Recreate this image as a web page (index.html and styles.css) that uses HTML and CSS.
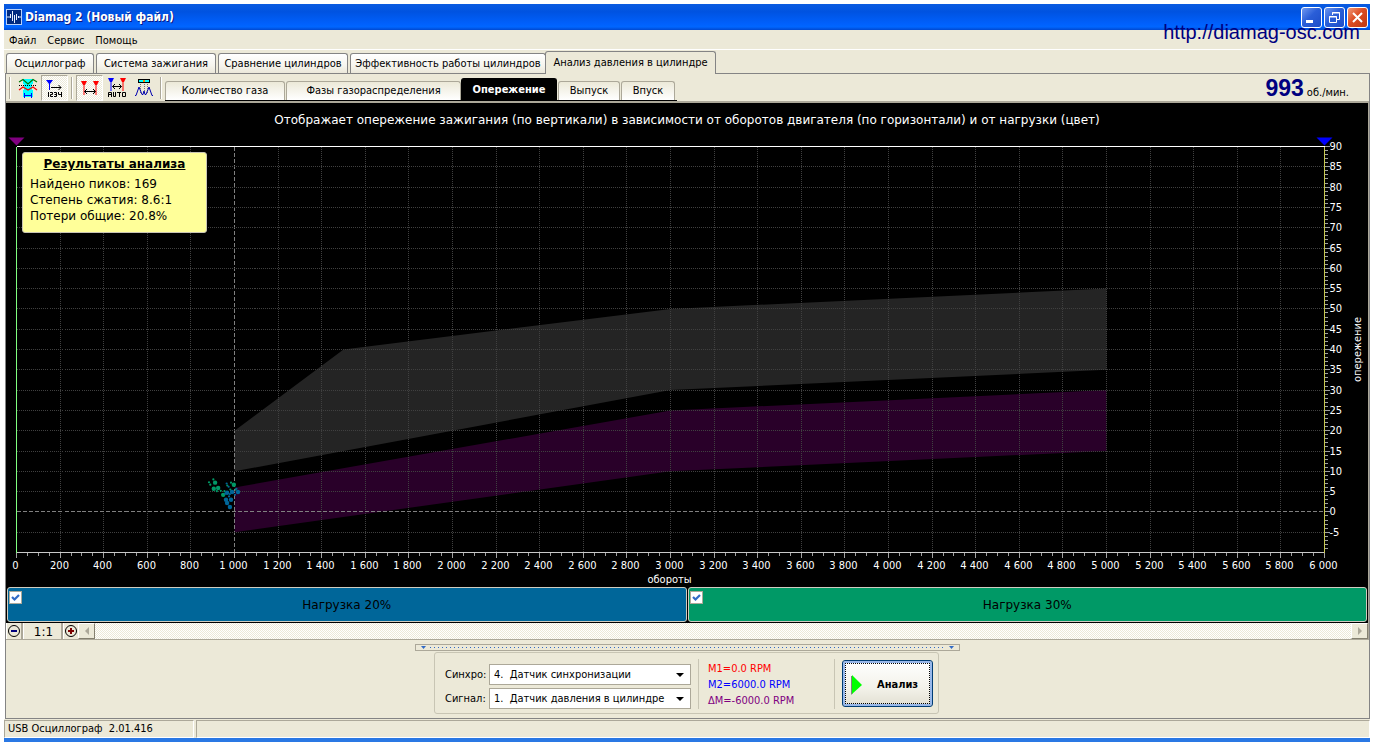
FILE: index.html
```html
<!DOCTYPE html>
<html lang="ru">
<head>
<meta charset="utf-8">
<title>Diamag 2 (Новый файл)</title>
<link rel="stylesheet" href="styles.css">
</head>
<body>
<div class="window">
  <header class="titlebar">
    <svg class="app-icon" viewBox="0 0 16 16" width="16" height="16">
      <rect x="0.5" y="0.5" width="15" height="15" fill="#002a80" stroke="#b8d0f8"/>
      <path d="M1 8H4M12 8H15" stroke="#d8e8ff"/>
      <path d="M4.500 5V9M6.500 2V12M8.500 6V14M10.500 5V11M12.500 7V9" stroke="#e8f0ff"/>
    </svg>
    <h1 class="title">Diamag 2 (Новый файл)</h1>
    <div class="window-buttons">
      <button class="win-btn" type="button" aria-label="Свернуть"><svg viewBox="0 0 19 19" width="19" height="19"><rect x="4" y="12" width="7" height="3" fill="#fff"/></svg></button>
      <button class="win-btn" type="button" aria-label="Восстановить"><svg viewBox="0 0 19 19" width="19" height="19"><path d="M7.500 7V4.500H14.500V11.500H12M7 5H15" fill="none" stroke="#fff"/><path d="M4.500 8.500H11.500V14.500H4.500ZM4 9H12" fill="none" stroke="#fff"/></svg></button>
      <button class="win-btn close" type="button" aria-label="Закрыть"><svg viewBox="0 0 19 19" width="19" height="19"><path d="M5 5L14 14M14 5L5 14" stroke="#fff" stroke-width="2"/></svg></button>
    </div>
    <a class="site-link" href="#">http://diamag-osc.com</a>
  </header>

  <nav class="menu">
    <button type="button">Файл</button>
    <button type="button">Сервис</button>
    <button type="button">Помощь</button>
  </nav>

  <div class="tabs" role="tablist">
    <button class="tab tab-s" role="tab" type="button">Осциллограф</button>
    <button class="tab tab-m" role="tab" type="button">Система зажигания</button>
    <button class="tab tab-l" role="tab" type="button">Сравнение цилиндров</button>
    <button class="tab tab-xl" role="tab" type="button">Эффективность работы цилиндров</button>
    <button class="tab active" role="tab" type="button" aria-selected="true">Анализ давления в цилиндре</button>
  </div>

  <main class="page">
    <div class="toolbar">
      <div class="tools">
        <i class="sep"></i>
        <button class="tool" type="button" aria-label="Фазы">
          <svg viewBox="0 0 20 20" width="20" height="20"><path d="M5 1H15V6H14V12H15V19H5V12H6V6H5Z" fill="#0ff"/><path d="M1 4L5 1.500L10 6L15 1.500L19 4" fill="none" stroke="#007a00" stroke-width="1.200"/><path d="M1 7.500H19" stroke="#000" stroke-dasharray="1 1"/><path d="M1 12L5 9L10 12L15 9L19 12" fill="none" stroke="#f00" stroke-width="1.300"/><path d="M6 17.500H14M6.500 15V20M13.500 15V20" stroke="#00f"/></svg>
        </button>
        <button class="tool pressed" type="button" aria-label="Нумерация">
          <svg viewBox="0 0 20 20" width="20" height="20"><path d="M1 2H8L5 6H4Z" fill="#00f"/><path d="M4.500 4V12" stroke="#00f"/><path d="M6 9.500H16M13.500 7L16 9.500L13.500 12" fill="none" stroke="#000"/><path d="M3.500 14V19M5 14.500H7.500V16.500H5.500V18.500H8M9 14.500H11.500V18.500H9M9.500 16.500H11.500M13.500 14V16.500H16.500M16.500 14V19" fill="none" stroke="#000"/></svg>
        </button>
        <i class="sep"></i>
        <button class="tool pressed" type="button" aria-label="Маркеры">
          <svg viewBox="0 0 20 20" width="20" height="20"><path d="M1 3H7L5 7H3ZM13 3H19L17 7H15Z" fill="#f00"/><path d="M4 5V17M16 5V17" stroke="#f00"/><path d="M4.500 13.500H15.500M7 11L4.500 13.500L7 16M13 11L15.500 13.500L13 16" fill="none" stroke="#000"/></svg>
        </button>
        <button class="tool" type="button" aria-label="Автомаркеры">
          <svg viewBox="0 0 20 20" width="20" height="20"><path d="M1 0H7L5 4H3Z" fill="#00f"/><path d="M4 2V13" stroke="#00f"/><path d="M13 0H19L17 4H15Z" fill="#f00"/><path d="M16 2V13" stroke="#f00"/><path d="M5.500 8.500H14.500M8 6L5.500 8.500L8 11M12 6L14.500 8.500L12 11" fill="none" stroke="#000"/><path d="M1.500 19V14.500H4.500V19M1.500 16.500H4.500M6.500 14V18.500H8.500V14M10 14.500H14M12.500 14V19M15.500 14.500H18.500V18.500H15.500Z" fill="none" stroke="#000"/></svg>
        </button>
        <button class="tool" type="button" aria-label="Пики">
          <svg viewBox="0 0 20 20" width="20" height="20"><rect x="4.500" y="1.500" width="11" height="3" fill="#0ff" stroke="#000"/><path d="M9 3H11" stroke="#f80" stroke-width="2"/><path d="M6.500 6V16M10.500 6V16M13.500 6V16" stroke="#777" stroke-dasharray="1 1"/><path d="M1 17.500H2L5 9L8 16.500H9L10 13L11 16.500H12L15 9L18 17.500H19" fill="none" stroke="#0000b0"/></svg>
        </button>
        <i class="sep"></i>
      </div>
      <div class="subtabs" role="tablist">
        <button class="subtab sub-m" role="tab" type="button">Количество газа</button>
        <button class="subtab sub-l" role="tab" type="button">Фазы газораспределения</button>
        <button class="subtab current" role="tab" type="button" aria-selected="true">Опережение</button>
        <button class="subtab sub-s" role="tab" type="button">Выпуск</button>
        <button class="subtab sub-xs" role="tab" type="button">Впуск</button>
      </div>
      <p class="rpm"><strong>993</strong> об./мин.</p>
    </div>

    <section class="analysis">
      <h2 class="chart-title">Отображает опережение зажигания (по вертикали) в зависимости от оборотов двигателя (по горизонтали) и от нагрузки (цвет)</h2>
      <div class="chart">
        <svg id="plot" class="plot" role="img" aria-label="Опережение зажигания"></svg>
        <aside class="results">
          <h3>Результаты анализа</h3>
          <p>Найдено пиков: 169</p>
          <p>Степень сжатия: 8.6:1</p>
          <p>Потери общие: 20.8%</p>
        </aside>
      </div>
      <div class="legend">
        <label class="load blue"><input type="checkbox" checked><span>Нагрузка 20%</span></label>
        <label class="load green"><input type="checkbox" checked><span>Нагрузка 30%</span></label>
      </div>
      <div class="scroller">
        <button class="zoom-btn" type="button" aria-label="Уменьшить"><svg viewBox="0 0 14 14" width="14" height="14"><circle cx="7" cy="7" r="5.500" fill="none" stroke="#000"/><path d="M4 7H10" stroke="#00007c" stroke-width="2"/></svg></button>
        <button class="zoom-btn ratio" type="button">1:1</button>
        <button class="zoom-btn plus" type="button" aria-label="Увеличить"><svg viewBox="0 0 14 14" width="14" height="14"><circle cx="7" cy="7" r="5.500" fill="none" stroke="#000"/><path d="M4 7H10M7 4V10" stroke="#7c0000" stroke-width="2"/></svg></button>
        <button class="arrow-btn" type="button" aria-label="Влево"><svg viewBox="0 0 8 8" width="8" height="8"><path d="M6 0V8L2 4Z" fill="#aca899"/></svg></button>
        <div class="track"></div>
        <button class="arrow-btn" type="button" aria-label="Вправо"><svg viewBox="0 0 8 8" width="8" height="8"><path d="M2 0V8L6 4Z" fill="#aca899"/></svg></button>
      </div>
    </section>

    <div class="splitter">
      <svg viewBox="0 0 5 3" width="5" height="3"><path d="M0 0H5L2.500 3Z" fill="#316ac5"/></svg>
      <i class="dots"></i>
      <svg viewBox="0 0 5 3" width="5" height="3"><path d="M0 0H5L2.500 3Z" fill="#316ac5"/></svg>
    </div>

    <form class="controls">
      <div class="fields">
        <label for="sync">Синхро:</label>
        <select id="sync"><option>4.&nbsp; Датчик синхронизации</option></select>
        <label for="signal">Сигнал:</label>
        <select id="signal"><option>1.&nbsp; Датчик давления в цилиндре</option></select>
      </div>
      <div class="markers">
        <p class="m1">M1=0.0 RPM</p>
        <p class="m2">M2=6000.0 RPM</p>
        <p class="dm">ΔM=-6000.0 RPM</p>
      </div>
      <button class="run" type="button">
        <svg viewBox="0 0 11 20" width="11" height="20"><path d="M0 1V20L2 18V1Z" fill="#808080"/><path d="M1 0V19L11 10Z" fill="#0f0"/></svg>
        <span>Анализ</span>
      </button>
    </form>
  </main>

  <footer class="status">
    <span class="cell version">USB Осциллограф&nbsp; 2.01.416</span>
    <span class="cell rest"></span>
  </footer>
</div>
<script src="chart.js"></script>
</body>
</html>
```
FILE: styles.css
```css
* { box-sizing: border-box; }
body {
  margin: 0;
  background: #fff;
  font: 11px/16px "DejaVu Sans Condensed", "DejaVu Sans", sans-serif;
  color: #000;
}
h1, h2, h3, p { margin: 0; font-weight: normal; }
button { margin: 0; padding: 0; border: 0; background: none; font: inherit; color: inherit; }
svg { display: block; flex: none; }

.window {
  display: flex;
  flex-direction: column;
  min-height: 100vh;
  padding: 4px 4px 0;
}

/* Title bar */
.titlebar {
  position: relative;
  display: flex;
  align-items: center;
  gap: 3px;
  height: 26px;
  padding: 0 2px;
  background: linear-gradient(#0a5be0 0, #0053e1 30%, #0060fc 75%, #0066ff 88%, #0048d0 100%);
}
.title {
  flex: 1;
  font: bold 12px/20px "DejaVu Sans Condensed", "DejaVu Sans", sans-serif;
  color: #fff;
  text-shadow: 1px 1px 0 #0a1883;
}
.window-buttons { display: flex; gap: 2px; }
.win-btn {
  width: 21px;
  height: 21px;
  border: 1px solid #fff;
  border-radius: 3px;
  background: linear-gradient(135deg, #7098f0, #2a5ed8 45%, #1c4cc8);
}
.win-btn.close { background: linear-gradient(135deg, #f09878, #dc4c24 45%, #c03810); }
.site-link {
  position: absolute;
  right: 10px;
  top: 17px;
  font: 20px/23px "Liberation Sans", sans-serif;
  color: #000080;
  text-decoration: none;
}

/* Menu and main tabs */
.menu {
  display: flex;
  gap: 11px;
  height: 20px;
  padding: 3px 5px 0;
  background: #ece9d8;
  border-bottom: 1px solid #fff;
}
.tabs {
  display: flex;
  align-items: flex-end;
  gap: 2px;
  height: 23px;
  padding-left: 2px;
  background: #ece9d8;
}
.tab {
  height: 20px;
  border: 1px solid #848484;
  border-bottom: 0;
  border-radius: 3px 3px 0 0;
  background: linear-gradient(#fff, #f6f5ee 60%, #ebe8da);
  white-space: nowrap;
}
.tab-s { width: 88px; }
.tab-m { width: 120px; }
.tab-l { width: 130px; }
.tab-xl { width: 196px; }
.tab.active {
  width: 171px;
  height: 23px;
  margin: 0 0 -1px -3px;
  padding-bottom: 1px;
  background: #ece9d8;
  z-index: 1;
}

/* Page */
.page {
  flex: 1;
  display: flex;
  flex-direction: column;
  margin: 0 0 0 1px;
  border: 1px solid #848484;
  background: #ece9d8;
}
.toolbar {
  display: flex;
  align-items: flex-end;
  height: 27px;
}
.tools { display: flex; align-items: center; width: 159px; height: 26px; }
.sep { width: 2px; height: 22px; margin: 0 3px; border-left: 1px solid #aca899; border-right: 1px solid #fff; }
.tool { display: grid; place-items: center; width: 27px; height: 26px; }
.tool.pressed {
  border: 1px solid;
  border-color: #aca899 #fff #fff #aca899;
  background: repeating-conic-gradient(#fff 0 25%, #ece9d8 0 50%) 0 0 / 2px 2px;
}
.subtabs {
  display: flex;
  align-items: flex-end;
  height: 23px;
  padding-right: 2px;
  gap: 1px;
  border-bottom: 1px solid #000;
}
.subtab {
  height: 19px;
  border: 1px solid #aca899;
  border-bottom: 0;
  border-radius: 3px 3px 0 0;
  background: linear-gradient(#ece9d8, #fff);
  white-space: nowrap;
}
.sub-m { width: 120px; }
.sub-l { width: 175px; }
.sub-s { width: 62px; }
.sub-xs { width: 54px; }
.subtab.current {
  width: 96px;
  height: 22px;
  margin-left: -1px;
  border-color: #000;
  background: #000;
  color: #fff;
  font-weight: bold;
}
.rpm { display: flex; align-items: baseline; gap: 3px; margin-left: auto; padding: 0 20px 0 0; }
.rpm strong { font: bold 23px/25px "Liberation Sans", sans-serif; color: #000080; }

/* Analysis panel */
.analysis {
  flex: 1;
  display: flex;
  flex-direction: column;
  background: #000;
  border-top: 2px solid #aca899;
  border-right: 1px solid #aca899;
}
.chart-title {
  padding-top: 8px;
  font: 12px/18px "DejaVu Sans", sans-serif;
  color: #fff;
  text-align: center;
  white-space: nowrap;
}
.chart { position: relative; flex: 1; min-height: 300px; }
.plot { position: absolute; width: 100%; height: 100%; }
.plot text { font: 11px "DejaVu Sans Condensed", "DejaVu Sans", sans-serif; fill: #fff; }
.results {
  position: absolute;
  left: 16px;
  top: 23px;
  width: 185px;
  height: 81px;
  padding: 3px 7px;
  border: 1px solid #c8c4b4;
  border-radius: 3px;
  background: #ffff99;
  font: 12px/16px "DejaVu Sans", sans-serif;
  white-space: nowrap;
}
.results h3 {
  margin-bottom: 4px;
  font-size: 12px;
  font-weight: bold;
  line-height: 16px;
  text-align: center;
  text-decoration: underline;
}
.legend { display: flex; gap: 1px; padding: 0 1px 1px; }
.load {
  position: relative;
  flex: 1;
  display: grid;
  place-items: center;
  height: 35px;
  border: 1px solid #d0ccc0;
  border-radius: 3px;
  font: 12px/16px "DejaVu Sans", sans-serif;
}
.load.blue { background: #006699; }
.load.green { background: #009966; }
.load input {
  position: absolute;
  left: 1px;
  top: 3px;
  width: 13px;
  height: 13px;
  margin: 0;
  appearance: none;
  border: 1px solid #aca899;
  background: #fff;
}
.load input:checked {
  background: #fff url("data:image/svg+xml,%3Csvg xmlns='http://www.w3.org/2000/svg' viewBox='0 0 11 11'%3E%3Cpath d='M2 5L4.500 7.500L9 3' fill='none' stroke='%23316ac5' stroke-width='2.200'/%3E%3C/svg%3E") center / 11px 11px no-repeat;
}

/* Zoom and scroll */
.scroller { display: flex; height: 17px; background: #ece9d8; border-bottom: 1px solid #aca899; }
.zoom-btn {
  display: grid;
  place-items: center;
  width: 17px;
  border-right: 2px solid #aca899;
  border-left: 1px solid #fff;
}
.zoom-btn.ratio { width: 40px; font: 12px/16px "DejaVu Sans", sans-serif; padding: 1px 0 0 2px; }
.zoom-btn.plus { width: 15px; border-right: 0; }
.arrow-btn {
  display: grid;
  place-items: center;
  width: 17px;
  border: 1px solid;
  border-color: #fff #848070 #848070 #fff;
}
.track { flex: 1; background: repeating-conic-gradient(#fff 0 25%, #ece9d8 0 50%) 0 0 / 2px 2px; }

/* Bottom controls */
.splitter {
  display: flex;
  align-items: center;
  justify-content: space-between;
  gap: 4px;
  align-self: center;
  width: 40%;
  height: 7px;
  margin-top: 4px;
  padding: 0 5px;
  border: 1px solid #aca899;
}
.dots { flex: 1; height: 1px; background: repeating-linear-gradient(90deg, #316ac5 0 1px, transparent 1px 4px); }
.controls {
  display: flex;
  align-items: center;
  align-self: center;
  height: 62px;
  margin: 1px 2px 4px 0;
  padding: 1px 5px 0 10px;
  border: 1px solid #c8c5b4;
  border-radius: 3px;
}
.fields {
  display: grid;
  grid-template-columns: 44px 202px;
  gap: 3px 0;
  align-items: center;
  padding-top: 6px;
}
.fields select {
  height: 21px;
  padding: 0 4px;
  appearance: none;
  border: 1px solid #aca899;
  border-radius: 0;
  color: #000;
  font: inherit;
  background: #fff url("data:image/svg+xml,%3Csvg xmlns='http://www.w3.org/2000/svg' viewBox='0 0 8 4'%3E%3Cpath d='M0 0H8L4 4Z'/%3E%3C/svg%3E") right 6px center / 8px 4px no-repeat;
}
.markers {
  width: 137px;
  height: 50px;
  margin: 0 7px;
  padding: 2px 9px 0;
  border: solid #c8c5b4;
  border-width: 0 1px;
}
.m1 { color: #f00; }
.m2 { color: #00f; }
.dm { color: #800080; }
.run {
  display: flex;
  align-items: center;
  gap: 15px;
  width: 91px;
  height: 47px;
  padding: 2px 0 0 8px;
  border: 1px solid #003c74;
  border-radius: 3px;
  background: linear-gradient(#fff, #f3f2ea 60%, #e2dfd2);
  box-shadow: inset 0 0 0 2px #98b8ea;
  outline: 1px dotted #000;
  outline-offset: -4px;
  font-weight: bold;
}

/* Status bar */
.status {
  display: flex;
  gap: 2px;
  height: 23px;
  padding-top: 1px;
  background: #ece9d8;
  border-bottom: 4px solid #2a78e4;
}
.cell { border: 1px solid; border-color: #aca899 #fff #fff #aca899; padding-left: 3px; }
.version { width: 190px; }
.rest { flex: 1; }
```
FILE: chart.js
```js
const NS = 'http://www.w3.org/2000/svg';
const svg = document.getElementById('plot');
const X_MAX = 6000, Y_MAX = 90, Y_MIN = -10;

const bands = [
  { fill: '#242424', points: [[1000, 20], [1500, 40], [3000, 50], [5000, 55], [5000, 35], [3000, 30], [1000, 10]] },
  { fill: '#290029', points: [[1000, 6], [3000, 25], [5000, 30], [5000, 15], [3000, 10], [1000, -5]] }
];
const peaks = [
  { color: '#009966', big: [[911, 7.2], [905, 5.7], [925, 5.9], [948, 4.2], [997, 6.7]],
    small: [[903, 8], [883, 7.3], [889, 6.7], [937, 5.2], [919, 5.1], [981, 5.5], [984, 7.2], [1005, 5.5], [954, 5.1], [967, 6.5]] },
  { color: '#006699', big: [[989, 4.9], [1016, 4.9], [966, 4.7], [961, 3], [984, 3], [966, 2.2], [979, 1.2]],
    small: [[964, 7], [973, 6.2], [979, 4.4], [1002, 4.2], [957, 4.5], [1009, 5.7], [975, 3.8]] }
];

function add(name, attrs, text) {
  const node = document.createElementNS(NS, name);
  for (const key in attrs) node.setAttribute(key, attrs[key]);
  if (text) node.textContent = text;
  svg.appendChild(node);
}
function line(x1, y1, x2, y2, stroke, dash) {
  add('line', { x1, y1, x2, y2, stroke, 'stroke-dasharray': dash || 'none', 'shape-rendering': 'crispEdges' });
}
function draw() {
  svg.replaceChildren();
  const { width, height } = svg.getBoundingClientRect();
  const left = 10.5, right = width - 43.5, top = 17.5, bottom = height - 34.5;
  const px = v => left + v / X_MAX * (right - left);
  const py = v => bottom - (v - Y_MIN) / (Y_MAX - Y_MIN) * (bottom - top);
  const snap = v => Math.floor(v) + 0.5;

  for (const band of bands) {
    add('polygon', { fill: band.fill, points: band.points.map(p => px(p[0]) + ',' + py(p[1])).join(' ') });
  }
  for (let v = 200; v < X_MAX; v += 200) {
    const x = snap(px(v));
    if (v === 1000) line(x, top, x, bottom, '#808080', '4 2');
    else line(x, top, x, bottom, '#404040', '1 1');
  }
  for (let v = -5; v < Y_MAX; v += 5) {
    const y = snap(py(v));
    if (v === 0) line(left, y, right, y, '#808080', '4 2');
    else line(left, y, right, y, '#404040', '1 1');
  }
  for (const group of peaks) {
    for (const [x, y] of group.big) add('circle', { cx: px(x), cy: py(y), r: 2.2, fill: group.color });
    for (const [x, y] of group.small) add('circle', { cx: px(x), cy: py(y), r: 1.1, fill: group.color });
  }
  line(left, top, right, top, '#fff');
  line(left, bottom, right, bottom, '#c8c8c8');
  line(left, top, left, bottom + 3, '#80ff80');
  line(right, top, right, bottom + 3, '#c8c850');

  for (let v = 0; v <= X_MAX; v += 50) {
    const x = snap(px(v));
    line(x, bottom, x, bottom + (v % 200 ? 3 : 5), '#a0a0a0');
    if (v % 200 === 0) {
      const label = v < 1000 ? String(v) : Math.floor(v / 1000) + ' ' + String(v % 1000).padStart(3, '0');
      add('text', { x: x - 1, y: bottom + 16, 'text-anchor': 'middle' }, label);
    }
  }
  for (let v = Y_MIN + 1; v <= Y_MAX; v++) {
    const y = snap(py(v));
    line(right, y, right + (v % 5 ? 3 : 5), y, '#a0a0a0');
    if (v % 5 === 0) add('text', { x: right + 5, y: y + 3 }, String(v));
  }
  add('text', { x: (left + right) / 2 - 1, y: bottom + 30, 'text-anchor': 'middle' }, 'обороты');
  const cy = (top + bottom) / 2;
  add('text', { x: 0, y: 0, 'text-anchor': 'middle', transform: `translate(${right + 36} ${cy}) rotate(-90)` }, 'опережение');
  add('polygon', { fill: '#800080', points: `${left - 8},${top - 9} ${left + 8},${top - 9} ${left},${top - 1}` });
  add('polygon', { fill: '#00f', points: `${right - 8},${top - 9} ${right + 8},${top - 9} ${right},${top - 1}` });
}
draw();
window.addEventListener('resize', draw);
```
